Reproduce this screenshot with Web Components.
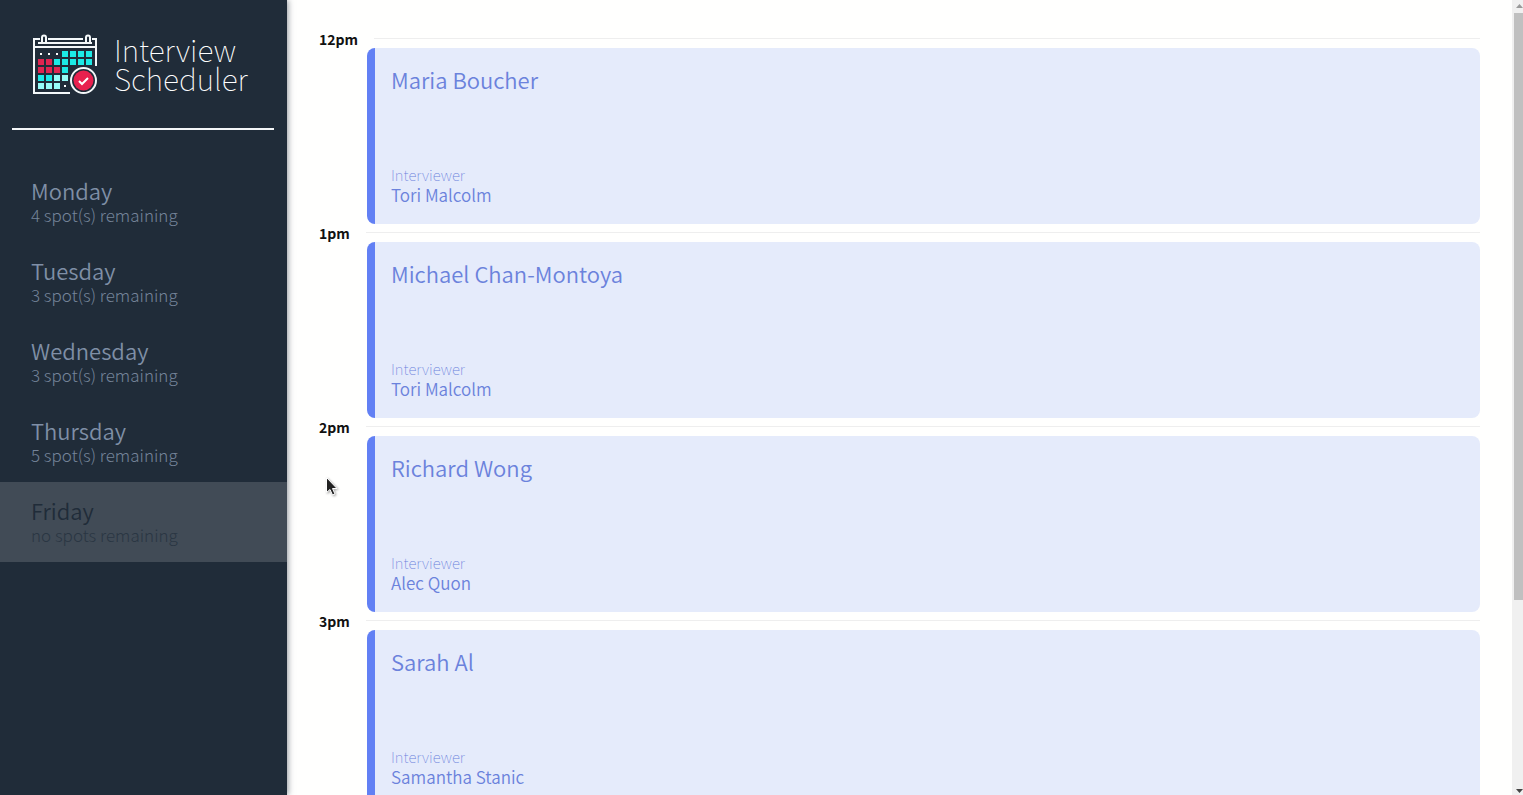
<!DOCTYPE html>
<html lang="en">
<head>
<meta charset="utf-8">
<title>Interview Scheduler</title>
<style>
  html, body { margin: 0; height: 100%; }
  body {
    background: #fffffe;
    font-family: "Noto Sans CJK SC", "Noto Sans CJK JP", "Noto Sans", sans-serif;
    overflow: hidden;
  }
</style>
</head>
<body>
<scheduler-app></scheduler-app>

<script>
const define = (name, html, setup) => {
  const template = document.createElement('template');
  template.innerHTML = html;
  customElements.define(name, class extends HTMLElement {
    constructor() {
      super();
      this.attachShadow({ mode: 'open' }).append(template.content.cloneNode(true));
    }
    connectedCallback() { if (setup) setup(this, this.shadowRoot); }
  });
};

define('calendar-logo', `
  <style>
    :host { display: block; width: 66px; height: 62px; }
    svg { display: block; }
  </style>
  <svg width="66" height="62" viewBox="0 0 66 62" aria-hidden="true">
    <g fill="none" stroke="#f4f8fa" stroke-width="2">
      <path d="M8 6H2V60H38M16 6H51M60 6H64V33"/>
      <path d="M6 10H60"/>
      <path d="M2 14H64"/>
      <path d="M10 10V4.500a2 2 0 0 1 4 0V10M54 10V4.500a2 2 0 0 1 4 0V10"/>
    </g>
    <g id="cells"></g>
    <circle cx="51.500" cy="47.500" r="12.500" fill="#202c39" stroke="#f4f8fa" stroke-width="2"/>
    <circle cx="51.500" cy="47.500" r="10" fill="#e8204e"/>
    <path d="M47 48L50 51L56 45" fill="none" stroke="#fff" stroke-width="2"/>
  </svg>`, (host, root) => {
  const rows = ['...cccc', 'rrccccc', 'rrrc', 'ccll', 'lll.'];
  const colours = { c: '#1ceae6', r: '#e02450', l: '#96fcf8' };
  let out = '';
  rows.forEach((row, y) => [...row].forEach((cell, x) => {
    out += cell === '.'
      ? `<rect x="${8 + x * 8}" y="${20 + y * 8}" width="2" height="2" fill="#fff"/>`
      : `<rect x="${6 + x * 8}" y="${18 + y * 8}" width="6" height="6" fill="${colours[cell]}"/>`;
  }));
  root.getElementById('cells').innerHTML = out;
});

define('day-item', `
  <style>
    :host { display: block; }
    button {
      display: block; width: 100%; height: 80px; box-sizing: border-box;
      margin: 0; padding: 15px 31px; border: 0; background: none;
      font: inherit; text-align: left; color: #7f8fa6; cursor: pointer;
    }
    span { display: block; }
    .name { font-size: 22px; line-height: 26px; font-weight: 350; }
    .spots { font-size: 17px; line-height: 24px; font-weight: 300; color: #75849a; }
    :host([full]) button { background: #414b56; color: #202c39; }
    :host([full]) .spots { color: #2a3643; }
  </style>
  <button type="button">
    <span class="name"><slot></slot></span>
    <span class="spots"><slot name="spots"></slot></span>
  </button>`);

define('app-sidebar', `
  <style>
    :host {
      display: block; flex: none; width: 287px; background: #202c39;
      box-shadow: 1px 0 6px rgba(33, 43, 57, .5); z-index: 1;
    }
    header { display: flex; align-items: center; gap: 16px; padding: 33px 32px 33px; }
    h1 { margin: 0; font-size: 30px; line-height: 29px; font-weight: 100; color: #fff; }
    hr { margin: 0 13px 32px 12px; border: 0; height: 2px; background: #f4f6f8; }
  </style>
  <header><calendar-logo></calendar-logo><h1>Interview<br>Scheduler</h1></header>
  <hr>
  <nav aria-label="Days"><slot></slot></nav>`);

define('hour-mark', `
  <style>
    :host { display: flex; height: 18px; }
    h2 { margin: 0; padding-right: 16px; font-size: 14px; line-height: 18px; font-weight: 700; color: #111; }
    i { flex: 1; height: 1px; margin-top: 8px; background: #eeeeee; }
  </style>
  <h2><slot></slot></h2><i></i>`);

define('interview-card', `
  <style>
    :host {
      display: flex; flex-direction: column; justify-content: space-between;
      box-sizing: border-box; height: 176px; margin-left: 48px; padding: 15px 16px 20px;
      border-left: 8px solid #6280f4; border-radius: 8px;
      background: #e5ebfb; color: #6b82dc;
    }
    h3, p { margin: 0; font-weight: 350; }
    h3 { font-size: 22px; line-height: 32px; }
    .role { font-size: 15px; line-height: 20px; font-weight: 100; }
    .who { font-size: 17px; line-height: 19px; }
  </style>
  <h3><slot></slot></h3>
  <div><p class="role">Interviewer</p><p class="who"><slot name="interviewer"></slot></p></div>`);

define('scroll-rail', `
  <style>
    :host { display: flex; flex-direction: column; align-items: flex-end; flex: none; width: 11px; background: #f0f0f0; }
    svg { display: block; flex: none; }
    .thumb { width: 9px; flex: 587; background: #c0c0c0; }
    .rest { flex: 182; }
  </style>
  <svg width="9" height="13" viewBox="0 0 9 13"><path d="M2 8L5.500 4L9 8Z" fill="#999"/></svg>
  <div class="thumb"></div><div class="rest"></div>
  <svg width="9" height="13" viewBox="0 0 9 13"><path d="M2 7L5.500 11L9 7Z" fill="#444"/></svg>`);

define('mouse-pointer', `
  <style>
    :host { display: block; position: absolute; left: 325px; top: 476px; z-index: 2; filter: drop-shadow(1px 1px 1px rgba(0,0,0,.35)); }
    svg { display: block; }
  </style>
  <svg width="14" height="22" viewBox="0 0 14 22" aria-hidden="true">
    <path d="M1.500 1.500V16.500L5 13.500L7.500 19L10 18L7.500 12.500H12Z" fill="#222" stroke="#fff"/>
  </svg>`);

define('scheduler-app', `
  <style>
    :host { display: flex; height: 100vh; overflow: hidden; }
    main { flex: 1; min-width: 0; padding: 30px 32px 0; overflow: hidden; }
  </style>
  <app-sidebar>
    <day-item>Monday<span slot="spots">4 spot(s) remaining</span></day-item>
    <day-item>Tuesday<span slot="spots">3 spot(s) remaining</span></day-item>
    <day-item>Wednesday<span slot="spots">3 spot(s) remaining</span></day-item>
    <day-item>Thursday<span slot="spots">5 spot(s) remaining</span></day-item>
    <day-item full>Friday<span slot="spots">no spots remaining</span></day-item>
  </app-sidebar>
  <main>
    <hour-mark>12pm</hour-mark>
    <interview-card>Maria Boucher<span slot="interviewer">Tori Malcolm</span></interview-card>
    <hour-mark>1pm</hour-mark>
    <interview-card>Michael Chan-Montoya<span slot="interviewer">Tori Malcolm</span></interview-card>
    <hour-mark>2pm</hour-mark>
    <interview-card>Richard Wong<span slot="interviewer">Alec Quon</span></interview-card>
    <hour-mark>3pm</hour-mark>
    <interview-card>Sarah Al<span slot="interviewer">Samantha Stanic</span></interview-card>
  </main>
  <scroll-rail></scroll-rail>
  <mouse-pointer></mouse-pointer>`);
</script>
</body>
</html>
